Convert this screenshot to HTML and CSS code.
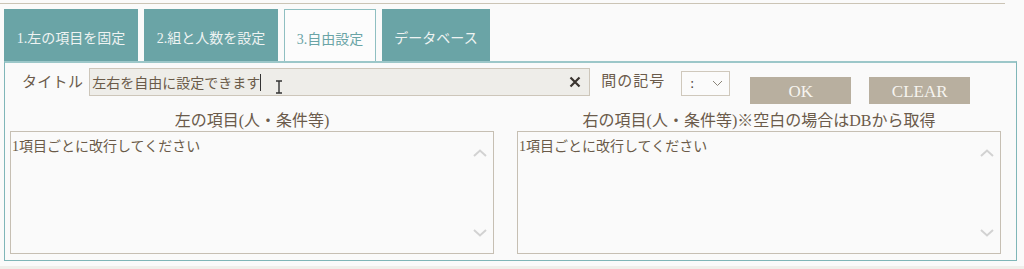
FILE: index.html
```html
<!DOCTYPE html>
<html lang="ja">
<head>
<meta charset="utf-8">
<title>設定</title>
<link rel="stylesheet" href="styles.css">
</head>
<body>
<div class="app">
  <div class="topline"></div>
  <div class="tabs">
    <div class="tab w1">1.左の項目を固定</div>
    <div class="tab w1">2.組と人数を設定</div>
    <div class="tab active w3">3.自由設定</div>
    <div class="tab w4">データベース</div>
  </div>
  <div class="panel">
    <div class="row1">
      <span class="lbl title-lbl">タイトル</span>
      <div class="title-input">
        <span class="title-text">左右を自由に設定できます</span><span class="caret"></span>
        <svg class="ibeam" width="8" height="14" viewBox="0 0 8 14"><path d="M1 1h6M4 1v12M1 13h6" stroke="#333" stroke-width="1.4" fill="none"/></svg>
        <svg class="clear-x" width="12" height="12" viewBox="0 0 12 12"><path d="M1.5 1.5l9 9M10.5 1.5l-9 9" stroke="#3a3530" stroke-width="2.2" fill="none"/></svg>
      </div>
      <span class="lbl sep-lbl">間の記号</span>
      <div class="select">
        <span class="sel-val">:</span>
        <svg width="11" height="7" viewBox="0 0 11 7"><path d="M1 1l4.5 4.5L10 1" stroke="#8a8478" stroke-width="1" fill="none"/></svg>
      </div>
      <div class="btn ok">OK</div>
      <div class="btn clear">CLEAR</div>
    </div>
    <div class="row2">
      <div class="col">
        <div class="col-lbl">左の項目(人・条件等)</div>
        <div class="ta-wrap">
          <textarea class="ta">1項目ごとに改行してください</textarea>
          <svg class="arr up" width="14" height="8" viewBox="0 0 14 8"><path d="M1 7l6-5.5L13 7" stroke="#d2d2d2" stroke-width="2" fill="none"/></svg>
          <svg class="arr down" width="14" height="8" viewBox="0 0 14 8"><path d="M1 1l6 5.5L13 1" stroke="#d2d2d2" stroke-width="2" fill="none"/></svg>
        </div>
      </div>
      <div class="col">
        <div class="col-lbl">右の項目(人・条件等)※空白の場合はDBから取得</div>
        <div class="ta-wrap">
          <textarea class="ta">1項目ごとに改行してください</textarea>
          <svg class="arr up" width="14" height="8" viewBox="0 0 14 8"><path d="M1 7l6-5.5L13 7" stroke="#d2d2d2" stroke-width="2" fill="none"/></svg>
          <svg class="arr down" width="14" height="8" viewBox="0 0 14 8"><path d="M1 1l6 5.5L13 1" stroke="#d2d2d2" stroke-width="2" fill="none"/></svg>
        </div>
      </div>
    </div>
  </div>
  <div class="band"></div>
</div>
</body>
</html>
```
FILE: styles.css
```css
html, body {
  margin: 0;
  padding: 0;
  background: #fafafa;
}
body {
  font-family: "Liberation Serif", "Noto Sans CJK JP", serif;
  color: #6a5a48;
  width: 1024px;
  height: 269px;
  overflow: hidden;
}
.app {
  padding-top: 3px;
}
.topline {
  width: 1005px;
  border-top: 1px solid #cbc4b5;
}
.tabs {
  display: flex;
  gap: 6px;
  margin-top: 5px;
  padding-left: 4px;
}
.tab {
  height: 52px;
  box-sizing: border-box;
  display: flex;
  align-items: center;
  justify-content: center;
  background: #6aa4a6;
  color: #eef3f2;
  font-size: 14px;
  padding-top: 4px;
}
.tab.w1 { width: 134px; }
.tab.w3 { width: 92px; }
.tab.w4 { width: 108px; }
.tab.active {
  background: #fcfcfc;
  border: 1px solid #8fbfc1;
  border-bottom: none;
  color: #6aa4a6;
}
.panel {
  margin-left: 4px;
  width: 1013px;
  height: 200px;
  box-sizing: border-box;
  border: 1px solid #7fb6b8;
  border-top: 2px solid #9cc7c9;
  background: #fafafa;
  padding: 5px 15px 0 5px;
}
.row1 {
  display: flex;
  align-items: flex-start;
  height: 43px;
}
.lbl {
  font-size: 15px;
  color: #6b5b4b;
  line-height: 28px;
}
.title-lbl {
  margin-left: 12px;
  letter-spacing: 0.3px;
}
.title-input {
  position: relative;
  margin-left: 6px;
  width: 501px;
  height: 28px;
  box-sizing: border-box;
  background: #eeede9;
  border: 1px solid #cdc6ba;
  display: flex;
  align-items: center;
  padding-left: 2px;
  font-size: 14px;
}
.title-text {
  color: #6a5a48;
}
.caret {
  display: inline-block;
  width: 1px;
  height: 17px;
  background: #333;
  margin-left: 0;
}
.ibeam {
  position: absolute;
  left: 185px;
  top: 11px;
}
.clear-x {
  position: absolute;
  right: 8px;
  top: 7px;
}
.sep-lbl {
  margin-left: 11px;
  line-height: 26px;
  letter-spacing: 1px;
}
.select {
  margin-left: 16px;
  margin-top: 3px;
  width: 49px;
  height: 25px;
  box-sizing: border-box;
  border: 1px solid #cfc8bc;
  background: #fbfbfb;
  display: flex;
  align-items: center;
  justify-content: space-between;
  padding: 0 6px 0 8px;
  font-size: 14px;
  color: #4a4038;
}
.btn {
  margin-top: 9px;
  width: 101px;
  height: 27px;
  background: #b8af9f;
  color: #f6f4ef;
  font-size: 17px;
  display: flex;
  align-items: center;
  justify-content: center;
  padding-top: 3px;
  box-sizing: border-box;
}
.btn.ok { margin-left: 20px; }
.btn.clear { margin-left: 18px; }
.row2 {
  display: flex;
  gap: 23px;
}
.col {
  width: 484px;
  display: flex;
  flex-direction: column;
}
.col-lbl {
  text-align: center;
  font-size: 16px;
  line-height: 20px;
  color: #6b5b4b;
}
.ta-wrap {
  position: relative;
  height: 123px;
}
.ta {
  display: block;
  width: 484px;
  height: 123px;
  box-sizing: border-box;
  margin: 0;
  border: 1px solid #c6bfb3;
  background: #fafafa;
  font-family: "Liberation Serif", "Noto Sans CJK JP", serif;
  font-size: 14px;
  color: #6a5a48;
  padding: 6px 1px;
  resize: none;
  overflow: hidden;
  outline: none;
  line-height: 18px;
}
.arr {
  position: absolute;
  right: 7px;
}
.arr.up { top: 18px; }
.arr.down { bottom: 17px; }
.band {
  margin-top: 5px;
  height: 5px;
  background: #efefeb;
}
```
